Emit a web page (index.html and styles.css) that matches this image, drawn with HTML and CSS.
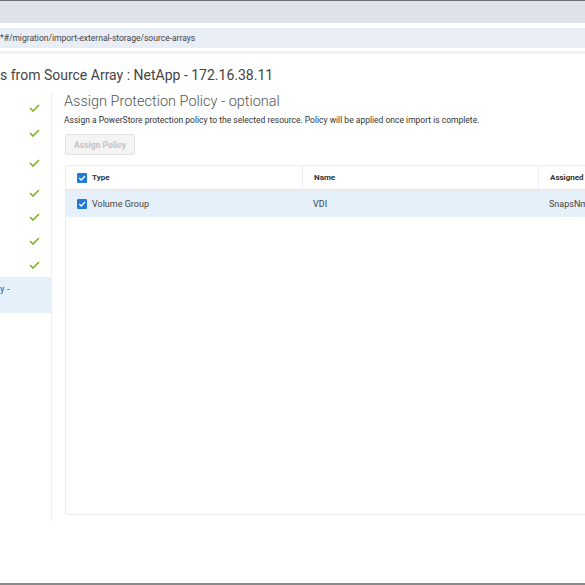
FILE: index.html
```html
<!DOCTYPE html>
<html>
<head>
    <title>Import External Storage</title>
    <meta charset="UTF-8">
    <link rel="stylesheet" href="styles.css">
</head>
<body>
    <div class="topbar"></div>
    <div class="urlbar-wrap">
        <div class="urlbar">*#/migration/import-external-storage/source-arrays</div>
    </div>
    <div class="urlbar-shadow"></div>

    <h1 class="page-title">s from Source Array : NetApp - 172.16.38.11</h1>

    <div class="wizard">
        <div class="steps">
            <div class="step h26"><span class="check"></span></div>
            <div class="step h24"><span class="check"></span></div>
            <div class="step h36"><span class="check"></span></div>
            <div class="step h24"><span class="check"></span></div>
            <div class="step h24"><span class="check"></span></div>
            <div class="step h24"><span class="check"></span></div>
            <div class="step h24"><span class="check"></span></div>
            <div class="step current">y -</div>
        </div>

        <div class="content">
            <h2>Assign Protection Policy - optional</h2>
            <p class="desc">Assign a PowerStore protection policy to the selected resource. Policy will be applied once import is complete.</p>
            <button class="btn" disabled>Assign Policy</button>

            <div class="grid">
                <div class="grid-row grid-head">
                    <div class="cell col-type"><span class="cb"></span>Type</div>
                    <div class="cell col-name">Name</div>
                    <div class="cell col-policy">Assigned P</div>
                </div>
                <div class="grid-row grid-item">
                    <div class="cell col-type"><span class="cb"></span>Volume Group</div>
                    <div class="cell col-name">VDI</div>
                    <div class="cell col-policy">SnapsNm</div>
                </div>
            </div>
        </div>
    </div>

    <div class="bottombar"></div>

    <script>
        // draw the little check glyphs
        const checkSvg = '<svg width="11" height="8" viewBox="0 0 11 8"><polyline points="1,4 4,7 10,1" fill="none" stroke="#7ab51d" stroke-width="1.6"/></svg>';
        const boxSvg = '<svg width="10" height="10" viewBox="0 0 10 10"><rect width="10" height="10" rx="1" fill="#1f7bd3"/><polyline points="2.2,5 4.2,7 8,3" fill="none" stroke="#fff" stroke-width="1.3"/></svg>';
        document.querySelectorAll(".check").forEach(el => el.innerHTML = checkSvg);
        document.querySelectorAll(".cb").forEach(el => el.innerHTML = boxSvg);
    </script>
</body>
</html>
```

FILE: styles.css
```css
html, body {
    margin: 0;
    padding: 0;
    height: 585px;
    overflow: hidden;
}

body {
    font-family: Roboto, "Liberation Sans", sans-serif;
    background-color: #fff;
    color: #333;
    position: relative;
}

.topbar {
    height: 22px;
    border-top: 1px solid #6b6f74;
    background-color: #dfe2e8;
}

.urlbar-wrap {
    padding: 5px 0 3px;
}

.urlbar {
    height: 20px;
    line-height: 20px;
    background-color: #e9edf5;
    font-size: 8.5px;
    color: #444;
    padding-left: 0;
}

.urlbar-shadow {
    height: 3px;
    background-color: #f3f3f3;
}

.page-title {
    margin: 12px 0 0;
    font-size: 14px;
    font-weight: 400;
    color: #444;
    line-height: 18px;
}

.wizard {
    display: flex;
    margin-top: 9px;
}

.steps {
    width: 51px;
    height: 426px;
    border-right: 1px solid #eeeeee;
    flex-shrink: 0;
    padding-top: 2px;
}

.step {
    display: flex;
    align-items: center;
    justify-content: flex-end;
    padding-right: 11px;
}

.h24 { height: 24px; }
.h26 { height: 26px; }
.h36 { height: 36px; }

.check {
    display: flex;
}

.step.current {
    height: 36px;
    justify-content: flex-start;
    align-items: flex-start;
    background-color: #e6f0fb;
    color: #2a7fd0;
    font-size: 9px;
    font-weight: 500;
    padding-top: 7px;
    box-sizing: border-box;
}

.content {
    padding-left: 12px;
    flex: 1;
    min-width: 0;
}

h2 {
    margin: 0;
    font-size: 14.5px;
    font-weight: 300;
    color: #555;
    line-height: 18px;
}

.desc {
    margin: 3px 0 0;
    font-size: 8.5px;
    color: #333;
    line-height: 12px;
}

.btn {
    margin-top: 8px;
    margin-left: 1px;
    width: 70px;
    height: 21px;
    background-color: #f4f4f4;
    border: 1px solid #e2e2e2;
    border-radius: 2px;
    color: #c4c4c4;
    font-family: Roboto, sans-serif;
    font-size: 8.5px;
    font-weight: 700;
    padding: 0;
}

.grid {
    margin-top: 10px;
    margin-left: 1px;
    width: 560px;
    height: 348px;
    border: 1px solid #eeeeee;
    border-radius: 2px;
}

.grid-row {
    display: flex;
}

.grid-head {
    height: 23px;
    border-bottom: 2px solid #e6e9ee;
    font-size: 8px;
    font-weight: 700;
    color: #333;
}

.grid-item {
    height: 26px;
    background-color: #e6f0fb;
    font-size: 9px;
    color: #444;
}

.cell {
    display: flex;
    align-items: center;
    box-sizing: border-box;
    flex-shrink: 0;
}

.col-type {
    width: 236px;
    padding-left: 11px;
}

.col-name {
    width: 236px;
    padding-left: 11px;
}

.col-policy {
    flex: 1;
    padding-left: 11px;
    white-space: nowrap;
}

.grid-head .col-name,
.grid-head .col-policy {
    border-left: 1px solid #eeeeee;
}

.cb {
    display: flex;
    margin-right: 5px;
}

.bottombar {
    position: absolute;
    left: 0;
    right: 0;
    bottom: 0;
    height: 2px;
    background-color: #8a8a8a;
}
```
